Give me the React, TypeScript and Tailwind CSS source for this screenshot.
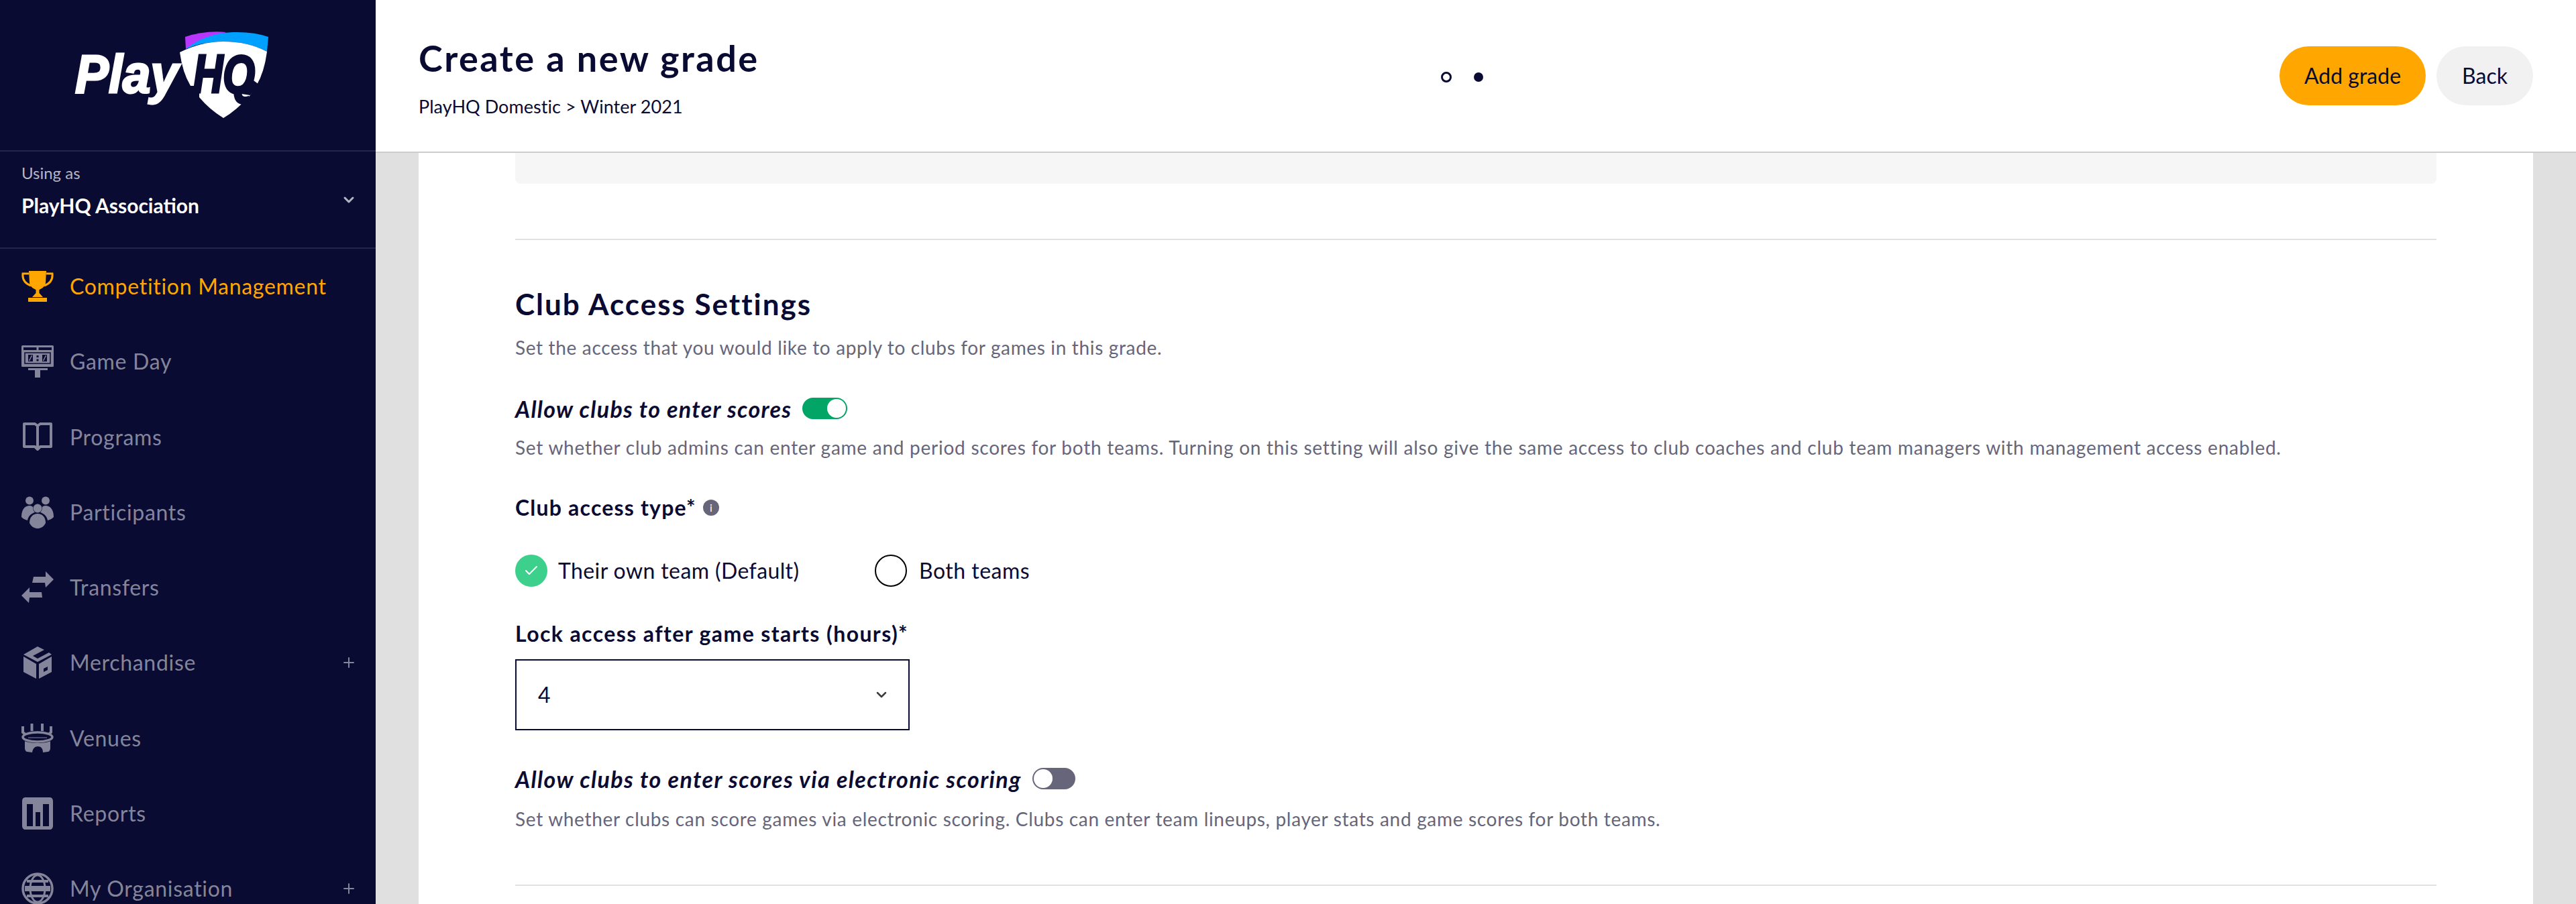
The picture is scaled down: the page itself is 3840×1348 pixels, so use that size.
import { ChevronDown, Plus, Check } from "lucide-react";

const FONT = "font-['Lato','Noto_Sans',sans-serif]";
const dark = "#0a0b33";
const c = "#84859a";

function Logo() {
  return (
    <svg viewBox="0 0 360 170" className="h-[170px] w-[360px]">
      <path d="M196 25 Q226 15 257 18 L197 43Z" fill="#b936ff" />
      <path d="M197 43 Q225 20 267 18 Q298 17 320 25 L318 47 Q290 32 253 32 Q222 32 197 43Z" fill="#00a0ff" />
      <path d="M188 48 Q220 32 253 32 Q290 32 318 47 Q314 78 302 98 L293 112 Q272 135 253 146 Q232 133 217 115 L204 98 Q192 78 188 48Z" fill="#fff" />
      <path d="M202 98 L217 98 L217 116 L200 116Z" fill={dark} />
      <path d="M280 110 L293 112 L306 96 L298 90Z" fill={dark} />
      <text x="32" y="108" fontFamily="Liberation Sans" fontWeight="700" fontStyle="italic" fontSize="80" fill="#fff" stroke="#fff" strokeWidth="3" textLength="154" lengthAdjust="spacingAndGlyphs">Play</text>
      <text x="208" y="108" fontFamily="Liberation Sans" fontWeight="700" fontStyle="italic" fontSize="80" fill={dark} stroke={dark} strokeWidth="4" textLength="92" lengthAdjust="spacingAndGlyphs">HQ</text>
    </svg>
  );
}

function Trophy({ color }: { color: string }) {
  return (
    <svg viewBox="0 0 48 48" className="h-12 w-12 shrink-0">
      <path d="M11 1 H37 L36 19 C35 25 29 28 26.500 29 V34 L32 40 H16 L21.500 34 V29 C19 28 13 25 12 19Z" fill={color} />
      <rect x="10" y="41" width="28" height="6" fill={color} />
      <path d="M11 5 H2 C1 14 6 20 14 23 M37 5 H46 C47 14 42 20 34 23" fill="none" stroke={color} strokeWidth="3" />
    </svg>
  );
}

function Score() {
  return (
    <svg viewBox="0 0 48 48" className="h-12 w-12 shrink-0">
      <rect x="0" y="0" width="48" height="32" rx="1.500" fill={c} />
      <rect x="3" y="3" width="19.500" height="4" fill={dark} />
      <rect x="25.500" y="3" width="19.500" height="4" fill={dark} />
      <rect x="5" y="11" width="38" height="16" fill="none" stroke={dark} strokeWidth="1.500" />
      <rect x="10" y="14" width="7" height="10" fill={dark} />
      <rect x="31" y="14" width="7" height="10" fill={dark} />
      <path d="M11.500 23 L15.500 15 M32.500 23 L36.500 15" stroke={c} strokeWidth="1.500" />
      <rect x="22.500" y="15" width="3" height="3" fill={dark} />
      <rect x="22.500" y="20.500" width="3" height="3" fill={dark} />
      <rect x="10" y="34" width="29" height="3" fill={c} />
      <rect x="20" y="37" width="8" height="11" fill={c} />
    </svg>
  );
}

function Book() {
  return (
    <svg viewBox="0 0 48 48" className="h-12 w-12 shrink-0">
      <path d="M4 4 H20 L24 7 L28 4 H44 V38 H28 L24 42 L20 38 H4Z M24 7 V42" fill="none" stroke={c} strokeWidth="4" strokeLinejoin="round" />
    </svg>
  );
}

function People() {
  return (
    <svg viewBox="0 0 48 48" className="h-12 w-12 shrink-0">
      <circle cx="12" cy="6.500" r="6" fill={c} />
      <circle cx="36" cy="6.500" r="6" fill={c} />
      <path d="M0 31 C0 20 5 14 12 14 C15 14 16 15 17 16 C17 21 19 23 20 24 C14 26 10 30 9 36 C5 35 2 33 0 31Z" fill={c} />
      <path d="M48 31 C48 20 43 14 36 14 C33 14 32 15 31 16 C31 21 29 23 28 24 C34 26 38 30 39 36 C43 35 46 33 48 31Z" fill={c} />
      <circle cx="24" cy="18" r="6.500" fill={c} />
      <path d="M12 40 C12 31 17 26 24 26 C31 26 36 31 36 40 C33 46 28 48 24 48 C20 48 15 46 12 40Z" fill={c} />
    </svg>
  );
}

function Arrows() {
  return (
    <svg viewBox="0 0 48 48" className="h-12 w-12 shrink-0">
      <path d="M18 8 H36 V0 L48 12 L36 24 L35 17 H16Z" fill={c} />
      <path d="M30 31 H12 V24 L0 36 L11 47 L12 39 H31Z" fill={c} />
    </svg>
  );
}

function Box() {
  return (
    <svg viewBox="0 0 48 48" className="h-12 w-12 shrink-0">
      <path d="M24 0 L34 5 L17 14 L24 18 L41 9 L45 12 L24 23 L3 12Z" fill={c} />
      <path d="M3 15 L22 26 V48 L3 38Z" fill={c} />
      <path d="M26 26 L45 15 V38 L26 48Z M33 33 V38 L39 35 V30Z" fill={c} fillRule="evenodd" />
    </svg>
  );
}

function Stadium() {
  return (
    <svg viewBox="0 0 48 48" className="h-12 w-12 shrink-0">
      <path d="M2 6 V15 L6 18 M15.500 2 V13 M31 2 V13 M44 6 V15 L41 18" stroke={c} strokeWidth="4" fill="none" />
      <ellipse cx="24" cy="22" rx="22" ry="7" fill="none" stroke={c} strokeWidth="3.500" />
      <path d="M5 28 C12 32 36 32 43 28 L43 38 C43 42 41 44 39 44 L32 45 C32 39 29 36 24.500 36 C20 36 17 39 16 45 L9 44 C7 44 5 42 5 38Z" fill={c} />
      <path d="M10 23 H38" stroke={c} strokeWidth="1" />
    </svg>
  );
}

function Bars() {
  return (
    <svg viewBox="0 0 48 48" className="h-12 w-12 shrink-0">
      <path d="M6 0 H42 C45 0 47 2 47 6 V42 C47 46 45 48 42 48 H6 C3 48 1 46 1 42 V6 C1 2 3 0 6 0Z M8 10 V43 H17 V10Z M21 22 V43 H28 V22Z M32 10 V43 H41 V10Z" fill={c} fillRule="evenodd" />
    </svg>
  );
}

function Globe() {
  return (
    <svg viewBox="0 0 48 48" className="h-12 w-12 shrink-0">
      <circle cx="24" cy="24" r="22" fill="none" stroke={c} strokeWidth="3.500" />
      <ellipse cx="24" cy="24" rx="11" ry="20" fill="none" stroke={c} strokeWidth="3" />
      <rect x="8" y="11" width="32" height="4" fill={c} />
      <rect x="5" y="20" width="38" height="8" fill={c} />
      <rect x="8" y="33" width="32" height="4" fill={c} />
    </svg>
  );
}

const navItems = [
  { label: "Game Day", icon: <Score /> },
  { label: "Programs", icon: <Book /> },
  { label: "Participants", icon: <People /> },
  { label: "Transfers", icon: <Arrows /> },
  { label: "Merchandise", icon: <Box />, more: true },
  { label: "Venues", icon: <Stadium /> },
  { label: "Reports", icon: <Bars /> },
  { label: "My Organisation", icon: <Globe />, more: true },
];

function Toggle({ on }: { on: boolean }) {
  return (
    <div className={`flex h-8 shrink-0 items-center rounded-full border-2 ${on ? "w-[67px] justify-end border-[#03a567] bg-[#03a567]" : "w-16 justify-start border-[#66657a] bg-[#66657a]"}`}>
      <div className="h-7 w-7 rounded-full bg-white" />
    </div>
  );
}

export default function App() {
  return (
    <div className={`flex h-[1348px] w-[3840px] overflow-hidden bg-[#e0e0e0] text-[#0a0b33] ${FONT}`}>
      <aside className="flex w-[560px] shrink-0 flex-col bg-[#0a0b33]">
        <div className="h-[226px] shrink-0 border-b-2 border-[#24254a] pl-[80px] pt-[30px]">
          <Logo />
        </div>
        <div className="relative h-[145px] shrink-0 border-b-2 border-[#24254a] px-8 pt-4">
          <p className="text-[24px] leading-8 text-[#b5b6c4]">Using as</p>
          <p className="mt-[16px] text-[30px] font-bold leading-8 text-white">PlayHQ Association</p>
          <ChevronDown className="absolute right-[28px] top-[60px] h-6 w-6 text-[#b5b6c4]" strokeWidth={3} />
        </div>
        <nav className="shrink-0">
          <div className="flex h-[112.25px] items-center pl-8 pr-7">
            <Trophy color="#ffa700" />
            <span className="ml-6 text-[32px] tracking-[0.7px] text-[#ffa700]">Competition Management</span>
          </div>
          {navItems.map((item) => (
            <div key={item.label} className="flex h-[112.25px] items-center pl-8 pr-7">
              {item.icon}
              <span className="ml-6 flex-1 text-[32px] tracking-[0.7px] text-[#84859a]">{item.label}</span>
              {item.more && <Plus className="h-6 w-6 text-[#84859a]" strokeWidth={2} />}
            </div>
          ))}
        </nav>
      </aside>
      <div className="flex min-w-0 flex-1 flex-col">
        <header className="flex h-[228px] shrink-0 items-center justify-between border-b-2 border-[#cccccc] bg-white px-16">
          <div className="w-[800px] pt-[5px]">
            <h1 className="text-[54px] font-bold leading-[62px] tracking-[2.5px]">Create a new grade</h1>
            <p className="mt-[25px] text-[27px] leading-8 tracking-[0.05px]">PlayHQ Domestic &gt; Winter 2021</p>
          </div>
          <div className="flex items-center gap-[33px] pt-1">
            <div className="h-4 w-4 rounded-full border-[3px] border-[#0a0b33]" />
            <div className="h-[14px] w-[14px] rounded-full bg-[#0a0b33]" />
          </div>
          <div className="flex w-[842px] justify-end gap-4">
            <button className="h-[88px] w-[218px] rounded-full bg-[#ffa700] text-[32px]">Add grade</button>
            <button className="h-[88px] w-[144px] rounded-full bg-[#f1f1f1] text-[32px]">Back</button>
          </div>
        </header>
        <main className="mx-16 flex-1 bg-white px-[144px]">
          <div className="h-[46px] rounded-b-lg bg-[#f6f6f6]" />
          <div className="mt-[82px] h-[2px] bg-[#e0e0e0]" />
          <h2 className="mt-[70px] text-[44px] font-bold leading-[50px] tracking-[2px]">Club Access Settings</h2>
          <p className="mt-[24px] text-[28px] leading-8 tracking-[0.65px] text-[#66657a]">Set the access that you would like to apply to clubs for games in this grade.</p>
          <div className="mt-[59px] flex h-8 items-center gap-4">
            <span className="text-[34px] font-bold italic tracking-[1.3px]">Allow clubs to enter scores</span>
            <Toggle on />
          </div>
          <p className="mt-[26px] text-[28px] leading-8 tracking-[0.74px] text-[#66657a]">Set whether club admins can enter game and period scores for both teams. Turning on this setting will also give the same access to club coaches and club team managers with management access enabled.</p>
          <div className="mt-[58px] flex h-8 items-center gap-2.5">
            <span className="text-[32px] font-bold tracking-[1.2px]">Club access type*</span>
            <div className="flex h-6 w-6 items-center justify-center rounded-full bg-[#66657a] text-[16px] leading-none text-white">i</div>
          </div>
          <div className="mt-[54px] flex h-12 items-center">
            <div className="flex h-12 w-12 items-center justify-center rounded-full bg-[#3dd08c]">
              <Check className="h-6 w-6 text-white" strokeWidth={2} />
            </div>
            <span className="ml-4 w-[472px] text-[32px] tracking-[0.4px]">Their own team (Default)</span>
            <div className="h-12 w-12 rounded-full border-2 border-black" />
            <span className="ml-[18px] text-[32px] tracking-[0.5px]">Both teams</span>
          </div>
          <p className="mt-[54px] text-[32px] font-bold leading-8 tracking-[1.4px]">Lock access after game starts (hours)*</p>
          <div className="mt-[22px] flex h-[106px] w-[588px] items-center justify-between border-2 border-[#0a0b33] pl-8 pr-7">
            <span className="text-[32px]">4</span>
            <ChevronDown className="h-6 w-6 text-[#3c3c3c]" strokeWidth={2.500} />
          </div>
          <div className="mt-[56px] flex h-8 items-center gap-4">
            <span className="text-[34px] font-bold italic tracking-[1.4px]">Allow clubs to enter scores via electronic scoring</span>
            <Toggle on={false} />
          </div>
          <p className="mt-[28px] text-[28px] leading-8 tracking-[0.68px] text-[#66657a]">Set whether clubs can score games via electronic scoring. Clubs can enter team lineups, player stats and game scores for both teams.</p>
          <div className="mt-[82px] h-[2px] bg-[#e0e0e0]" />
        </main>
      </div>
    </div>
  );
}
